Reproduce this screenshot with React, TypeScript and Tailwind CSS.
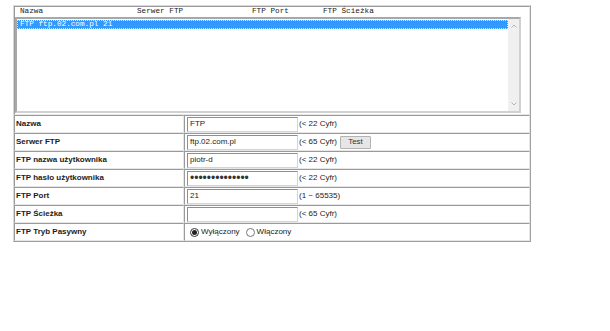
import React from "react";

const sans = "font-['Liberation_Sans',Arial,sans-serif]";
const mono = "font-['Liberation_Mono','Courier_New',monospace]";

type Row = { label: string; value?: string; hint: string; password?: boolean; test?: boolean };

const rows: Row[] = [
  { label: "Nazwa", value: "FTP", hint: "(< 22 Cyfr)" },
  { label: "Serwer FTP", value: "ftp.02.com.pl", hint: "(< 65 Cyfr)", test: true },
  { label: "FTP nazwa użytkownika", value: "piotr-d", hint: "(< 22 Cyfr)" },
  { label: "FTP hasło użytkownika", value: "••••••••••••••", hint: "(< 22 Cyfr)", password: true },
  { label: "FTP Port", value: "21", hint: "(1 ~ 65535)" },
  { label: "FTP Ścieżka", value: "", hint: "(< 65 Cyfr)" },
];

const cell = "border border-t-[#9a9a9a] border-l-[#9a9a9a] border-b-[#e6e6e6] border-r-[#e6e6e6] bg-white";

function Radio({ checked }: { checked: boolean }) {
  return (
    <span className={`w-[9px] h-[9px] rounded-full border flex items-center justify-center bg-white ${checked ? "border-[#333]" : "border-[#777]"}`}>
      {checked && <span className="w-[5px] h-[5px] rounded-full bg-[#222]" />}
    </span>
  );
}

function Field({ row }: { row: Row }) {
  return (
    <div className="flex h-[18px]">
      <div className={`${cell} w-[170px] flex items-center pl-[1px] text-[8px] font-bold text-[#1c1c1c]`}>{row.label}</div>
      <div className={`${cell} flex-1 flex items-center pl-[2px] text-[8px] text-[#222]`}>
        <div className={`w-[111px] h-[15px] border border-t-[#8f8f8f] border-l-[#8f8f8f] border-b-[#d4d4d4] border-r-[#d4d4d4] flex items-center pl-[2px] ${row.password ? "text-[12px] leading-none text-[#333]" : ""}`}>
          {row.value}
        </div>
        <span className="ml-[1px]">{row.hint}</span>
        {row.test && (
          <span className="ml-[3px] w-[31px] h-[13px] rounded-[1px] border border-[#b3b3b3] bg-[#e6e6e6] flex items-center justify-center text-[#333]">Test</span>
        )}
      </div>
    </div>
  );
}

export default function App() {
  return (
    <div className={`min-h-screen bg-white pl-[13px] pt-[5px] ${sans}`}>
      <div className="w-[518px] border border-t-[#d8d8d8] border-l-[#d8d8d8] border-b-[#9f9f9f] border-r-[#9f9f9f]">
        <div className={`${cell} h-[109px] pr-[8px]`}>
          <div className={`flex h-[10px] items-center pl-[5px] text-[7.7px] text-[#222] ${mono}`}>
            <span className="w-[117px]">Nazwa</span>
            <span className="w-[115px]">Serwer FTP</span>
            <span className="w-[71px]">FTP Port</span>
            <span>FTP Ścieżka</span>
          </div>
          <div className="h-[96px] border-2 border-t-[#a8a8a8] border-l-[#a8a8a8] border-b-[#d0d0d0] border-r-[#d0d0d0] flex">
            <div className="flex-1 pt-[1px]">
              <div className={`h-[9px] bg-[#3399ff] outline-1 outline-dotted outline-[#cfe4ff] -outline-offset-1 text-white text-[7.7px] leading-[9px] pl-[3px] ${mono}`}>
                FTP ftp.02.com.pl 21
              </div>
            </div>
            <div className="w-[11px] bg-[#f0f0f0] flex flex-col justify-between items-center py-[5px]">
              <svg width="6" height="4" viewBox="0 0 6 4"><path d="M0.5 3.5 L3 1 L5.5 3.5" fill="none" stroke="#b5b5b5" strokeWidth="1" /></svg>
              <svg width="6" height="4" viewBox="0 0 6 4"><path d="M0.5 0.5 L3 3 L5.5 0.5" fill="none" stroke="#b5b5b5" strokeWidth="1" /></svg>
            </div>
          </div>
        </div>
        {rows.map((r) => (
          <Field key={r.label} row={r} />
        ))}
        <div className="flex h-[18px]">
          <div className={`${cell} w-[170px] flex items-center pl-[1px] text-[8px] font-bold text-[#1c1c1c]`}>FTP Tryb Pasywny</div>
          <div className={`${cell} flex-1 flex items-center pl-[5px] text-[8px] text-[#222]`}>
            <Radio checked />
            <span className="ml-[2px]">Wyłączony</span>
            <span className="ml-[6px]"><Radio checked={false} /></span>
            <span className="ml-[2px]">Włączony</span>
          </div>
        </div>
      </div>
    </div>
  );
}
